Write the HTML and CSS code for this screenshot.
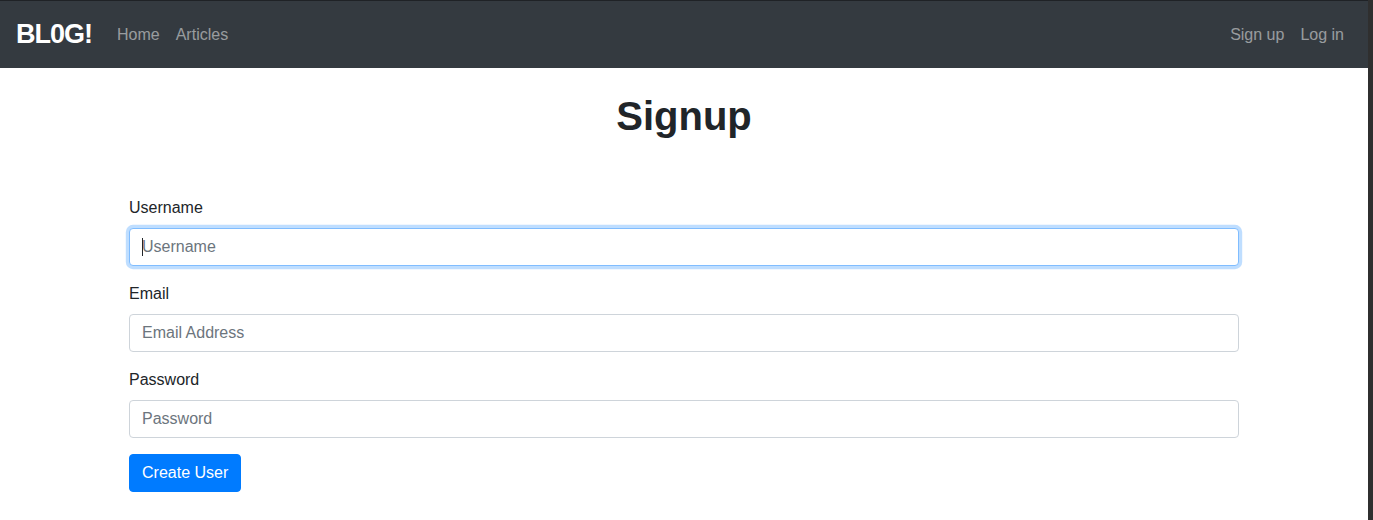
FILE: index.html
```html
<!DOCTYPE html>
<html lang="en">
<head>
<meta charset="utf-8">
<title>BL0G! - Signup</title>
<link rel="stylesheet" href="styles.css">
</head>
<body>
<div class="frame">
  <div class="page">
    <nav class="navbar">
      <a class="brand" href="#">BL0G!</a>
      <ul class="nav">
        <li><a class="nav-link" href="#">Home</a></li>
        <li><a class="nav-link" href="#">Articles</a></li>
      </ul>
      <ul class="nav nav-right">
        <li><a class="nav-link" href="#">Sign up</a></li>
        <li><a class="nav-link" href="#">Log in</a></li>
      </ul>
    </nav>
    <main class="container">
      <h1 class="title">Signup</h1>
      <form class="form">
        <div class="form-group">
          <label for="username">Username</label>
          <div class="input-wrap">
            <input id="username" class="form-control focus" type="text" placeholder="Username">
            <span class="caret"></span>
          </div>
        </div>
        <div class="form-group">
          <label for="email">Email</label>
          <input id="email" class="form-control" type="email" placeholder="Email Address">
        </div>
        <div class="form-group">
          <label for="password">Password</label>
          <input id="password" class="form-control" type="password" placeholder="Password">
        </div>
        <button type="button" class="btn">Create User</button>
      </form>
    </main>
  </div>
  <div class="edge"></div>
</div>
</body>
</html>
```

FILE: styles.css
```css
* { box-sizing: border-box; }
html, body { margin: 0; padding: 0; }
body {
  font-family: "Liberation Sans", Arial, sans-serif;
  font-size: 16px;
  line-height: 1.5;
  color: #212529;
  background: #fff;
}
.frame {
  display: flex;
  min-height: 520px;
}
.page {
  flex: 1;
  min-width: 0;
}
.edge {
  width: 5px;
  background: #2f2f2f;
}
.navbar {
  display: flex;
  align-items: center;
  height: 68px;
  padding: 0 16px;
  background: #343a40;
  border-top: 1px solid #1f2226;
}
.brand {
  font-size: 27px;
  font-weight: 700;
  letter-spacing: -1px;
  color: #fff;
  text-decoration: none;
  margin-right: 17px;
  line-height: 1;
}
.nav {
  display: flex;
  list-style: none;
  margin: 0;
  padding: 0;
}
.nav-right { margin-left: auto; }
.nav-link {
  display: block;
  padding: 8px;
  color: rgba(255, 255, 255, 0.5);
  text-decoration: none;
}
.container {
  max-width: 1140px;
  margin: 0 auto;
  padding: 0 15px;
}
.title {
  margin: 24px 0 8px;
  font-size: 40px;
  font-weight: 700;
  line-height: 1.2;
  text-align: center;
}
.form { margin-top: 56px; }
.form-group { margin-bottom: 16px; }
label {
  display: inline-block;
  margin-bottom: 8px;
}
.input-wrap { position: relative; }
.form-control {
  display: block;
  width: 100%;
  height: 38px;
  padding: 6px 12px;
  font-family: inherit;
  font-size: 16px;
  line-height: 1.5;
  color: #495057;
  background: #fff;
  border: 1px solid #ced4da;
  border-radius: 4px;
  outline: none;
}
.form-control::placeholder { color: #6c757d; opacity: 1; }
.form-control.focus {
  border-color: #80bdff;
  box-shadow: 0 0 0 3.2px rgba(0, 123, 255, 0.25);
}
.caret {
  position: absolute;
  left: 13px;
  top: 10px;
  width: 1px;
  height: 18px;
  background: #212529;
}
.btn {
  display: inline-block;
  padding: 6px 12px;
  font-family: inherit;
  font-size: 16px;
  line-height: 1.5;
  color: #fff;
  background: #007bff;
  border: 1px solid #007bff;
  border-radius: 4px;
}
```
